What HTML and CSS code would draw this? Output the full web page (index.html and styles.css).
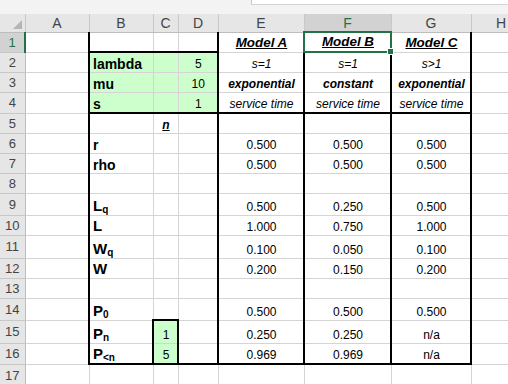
FILE: index.html
```html
<!DOCTYPE html>
<html>
<head>
<meta charset="utf-8">
<link rel="stylesheet" href="styles.css">
</head>
<body>
<div class="topbar"><div class="topbar-right"></div></div>
<table class="sheet">
<colgroup>
<col class="w-rh"><col class="w-a"><col class="w-b"><col class="w-c"><col class="w-d"><col class="w-e"><col class="w-f"><col class="w-g"><col class="w-h">
</colgroup>
<thead>
<tr class="hdr">
<th class="corner"><span class="tri"></span></th><th>A</th><th>B</th><th>C</th><th>D</th><th>E</th><th class="csel">F</th><th>G</th><th>H</th>
</tr>
</thead>
<tbody>
<tr class="h20"><th class="rh act">1</th><td></td><td class="bl bb"></td><td class="bb"></td><td class="bb"></td><td class="bl mh">Model A</td><td class="mh fsel">Model B<span class="handle"></span></td><td class="bl br mh">Model C</td><td></td></tr>
<tr class="h20"><th class="rh">2</th><td></td><td class="bl g lbl">lambda</td><td class="g"></td><td class="g num">5</td><td class="bl it">s=1</td><td class="bl it">s=1</td><td class="bl br it">s&gt;1</td><td></td></tr>
<tr class="h20"><th class="rh">3</th><td></td><td class="bl g lbl">mu</td><td class="g"></td><td class="g num">10</td><td class="bl bi">exponential</td><td class="bl bi">constant</td><td class="bl br bi">exponential</td><td></td></tr>
<tr class="h21"><th class="rh">4</th><td></td><td class="bl bb g lbl">s</td><td class="bb g"></td><td class="bb g num">1</td><td class="bl bb it">service time</td><td class="bl bb it">service time</td><td class="bl br bb it">service time</td><td></td></tr>
<tr class="h20"><th class="rh">5</th><td></td><td class="bl"></td><td class="nh">n</td><td></td><td class="bl"></td><td class="bl"></td><td class="bl br"></td><td></td></tr>
<tr class="h20"><th class="rh">6</th><td></td><td class="bl lbl">r</td><td></td><td></td><td class="bl num">0.500</td><td class="bl num">0.500</td><td class="bl br num">0.500</td><td></td></tr>
<tr class="h20"><th class="rh">7</th><td></td><td class="bl lbl">rho</td><td></td><td></td><td class="bl num">0.500</td><td class="bl num">0.500</td><td class="bl br num">0.500</td><td></td></tr>
<tr class="h20"><th class="rh">8</th><td></td><td class="bl"></td><td></td><td></td><td class="bl"></td><td class="bl"></td><td class="bl br"></td><td></td></tr>
<tr class="h22"><th class="rh">9</th><td></td><td class="bl lbl big">L<sub>q</sub></td><td></td><td></td><td class="bl num">0.500</td><td class="bl num">0.250</td><td class="bl br num">0.500</td><td></td></tr>
<tr class="h20"><th class="rh">10</th><td></td><td class="bl lbl big">L</td><td></td><td></td><td class="bl num">1.000</td><td class="bl num">0.750</td><td class="bl br num">1.000</td><td></td></tr>
<tr class="h23"><th class="rh">11</th><td></td><td class="bl lbl big">W<sub>q</sub></td><td></td><td></td><td class="bl num">0.100</td><td class="bl num">0.050</td><td class="bl br num">0.100</td><td></td></tr>
<tr class="h20"><th class="rh">12</th><td></td><td class="bl lbl big">W</td><td></td><td></td><td class="bl num">0.200</td><td class="bl num">0.150</td><td class="bl br num">0.200</td><td></td></tr>
<tr class="h20"><th class="rh">13</th><td></td><td class="bl"></td><td></td><td></td><td class="bl"></td><td class="bl"></td><td class="bl br"></td><td></td></tr>
<tr class="h22"><th class="rh">14</th><td></td><td class="bl lbl big">P<sub>0</sub></td><td></td><td></td><td class="bl num">0.500</td><td class="bl num">0.500</td><td class="bl br num">0.500</td><td></td></tr>
<tr class="h23"><th class="rh">15</th><td></td><td class="bl lbl big">P<sub>n</sub></td><td class="bl br bt g num">1</td><td></td><td class="bl num">0.250</td><td class="bl num">0.250</td><td class="bl br num">n/a</td><td></td></tr>
<tr class="h21"><th class="rh">16</th><td></td><td class="bl bb lbl big">P<sub>&lt;n</sub></td><td class="bl br bb g num">5</td><td class="bb"></td><td class="bl bb num">0.969</td><td class="bl bb num">0.969</td><td class="bl br bb num">n/a</td><td></td></tr>
<tr class="h22"><th class="rh">17</th><td></td><td></td><td></td><td></td><td></td><td></td><td></td><td></td></tr>
</tbody>
</table>
</body>
</html>
```
FILE: styles.css
```css
html, body {
  margin: 0;
  padding: 0;
  background: #ffffff;
  overflow: hidden;
  width: 508px;
  height: 384px;
  font-family: "Liberation Sans", Arial, sans-serif;
}
.topbar {
  height: 14px;
  background: #f3f3f3;
  display: flex;
  justify-content: flex-end;
}
.topbar-right {
  width: 256px;
  height: 4px;
  background: #ffffff;
  border-left: 1px solid #c6c6c6;
  border-bottom: 1px solid #d4d4d4;
}
.sheet {
  border-collapse: collapse;
  table-layout: fixed;
  width: 531px;
}
.w-rh { width: 25px; }
.w-a { width: 64px; }
.w-b { width: 64px; }
.w-c { width: 25px; }
.w-d { width: 40px; }
.w-e { width: 86px; }
.w-f { width: 87px; }
.w-g { width: 80px; }
.w-h { width: 60px; }

.hdr th {
  height: 17px;
  padding: 0;
  background: #e6e6e6;
  border-right: 1px solid #c8c8c8;
  border-bottom: 1px solid #bdbdbd;
  font-weight: normal;
  font-size: 14px;
  color: #444444;
  text-align: center;
  vertical-align: middle;
  line-height: 16px;
}
.hdr th.corner {
  position: relative;
  background: #e6e6e6;
}
.tri {
  position: absolute;
  right: 3px;
  bottom: 3px;
  width: 0;
  height: 0;
  border-left: 9px solid transparent;
  border-bottom: 9px solid #b5b5b5;
}
.hdr th.csel {
  background: #d2d2d2;
  color: #217346;
  border-bottom: 2px solid #217346;
}
th.rh {
  padding: 0;
  background: #e6e6e6;
  border-right: 1px solid #bdbdbd;
  border-bottom: 1px solid #c8c8c8;
  font-weight: normal;
  font-size: 13px;
  color: #444444;
  text-align: center;
  vertical-align: middle;
}
th.rh.act {
  background: #d2d2d2;
  color: #217346;
  border-right: 2px solid #217346;
}
tr.h20 { height: 20px; }
tr.h21 { height: 21px; }
tr.h22 { height: 22px; }
tr.h23 { height: 23px; }

td {
  padding: 0 2px 1px 3px;
  border: 1px solid #d4d4d4;
  font-size: 12px;
  line-height: 14px;
  color: #000000;
  vertical-align: bottom;
  white-space: nowrap;
  overflow: visible;
}
td.bl { border-left: 2px solid #000000; }
td.br { border-right: 2px solid #000000; }
td.bb { border-bottom: 2px solid #000000; }
td.bt { border-top: 2px solid #000000; }
td.g { background: #ccffcc; }

td.lbl {
  font-weight: bold;
  font-size: 14px;
  text-align: left;
}
td.big { font-size: 15px; line-height: 16px; }
td.lbl sub {
  font-size: 10px;
  vertical-align: -2px;
  line-height: 0;
}
td.num { text-align: center; }
td.mh {
  font-weight: bold;
  font-style: italic;
  text-decoration: underline;
  font-size: 13.4px;
  text-align: center;
  padding-bottom: 2px;
}
td.it {
  font-style: italic;
  font-size: 12px;
  text-align: center;
}
td.bi {
  font-weight: bold;
  font-style: italic;
  font-size: 12px;
  text-align: center;
}
td.nh {
  font-weight: bold;
  font-style: italic;
  text-decoration: underline;
  font-size: 12px;
  text-align: center;
}
td.fsel {
  position: relative;
  border: 2px solid #217346;
}
.handle {
  position: absolute;
  right: -4px;
  bottom: -4px;
  width: 5px;
  height: 5px;
  background: #217346;
  border: 1px solid #ffffff;
}
```
